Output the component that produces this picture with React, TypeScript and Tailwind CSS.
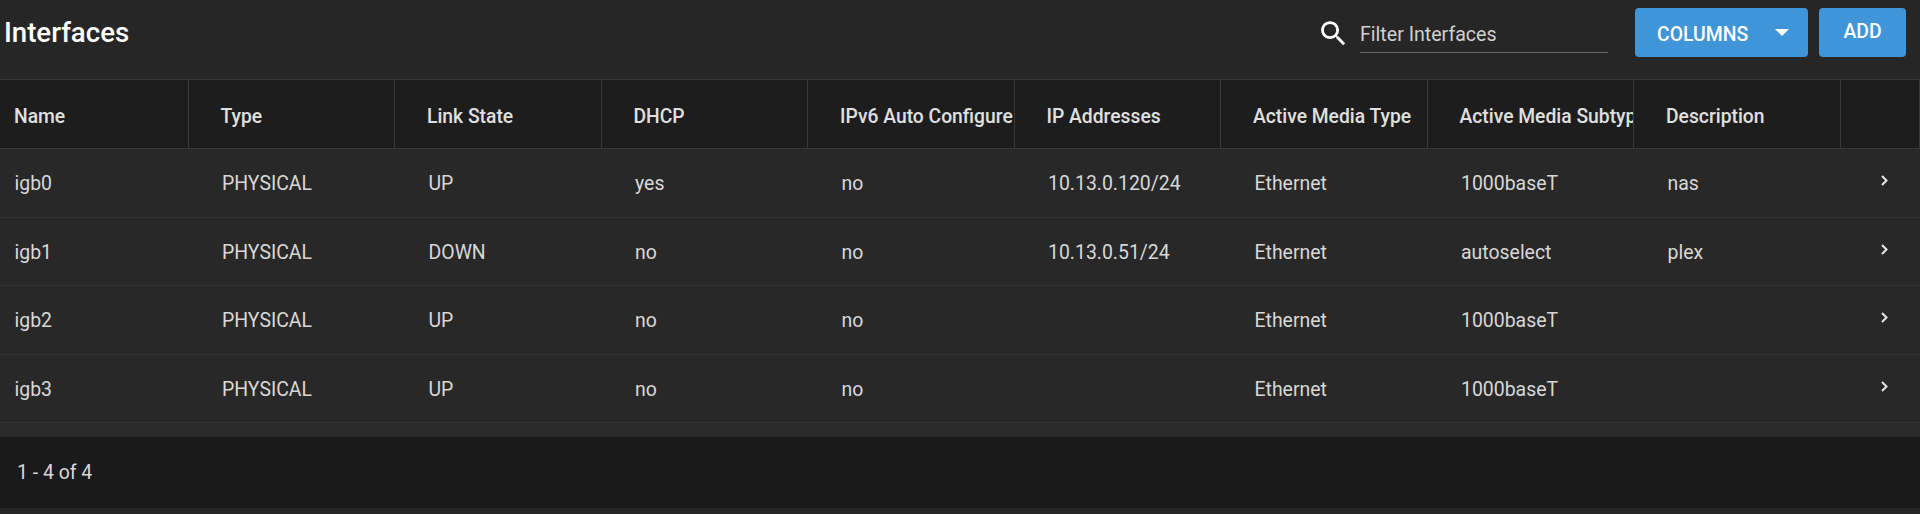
import React from "react";

const heads = ["Name","Type","Link State","DHCP","IPv6 Auto Configure","IP Addresses","Active Media Type","Active Media Subtype","Description",""];
const rows = [
  ["igb0","PHYSICAL","UP","yes","no","10.13.0.120/24","Ethernet","1000baseT","nas"],
  ["igb1","PHYSICAL","DOWN","no","no","10.13.0.51/24","Ethernet","autoselect","plex"],
  ["igb2","PHYSICAL","UP","no","no","","Ethernet","1000baseT",""],
  ["igb3","PHYSICAL","UP","no","no","","Ethernet","1000baseT",""],
];

function Chevron() {
  return (
    <svg width="10" height="12" viewBox="0 0 10 12" className="block">
      <path d="M3 1 L7.5 5.5 L3 10" fill="none" stroke="#e8e8e8" strokeWidth="2" />
    </svg>
  );
}

export default function App() {
  return (
    <div className="h-[514px] w-[1920px] overflow-hidden bg-[#262626] text-[#e0e0e0]" style={{ fontFamily: "Roboto, sans-serif" }}>
      <div className="flex h-[80px] items-start justify-between border-b border-[#3a3a3a]">
        <h1 className="ml-[4px] mt-[15px] text-[27.6px] font-medium leading-[36px] text-white">Interfaces</h1>
        <div className="flex items-start">
          <svg width="33" height="33" viewBox="0 0 24 24" className="mt-[17px]">
            <path fill="#fff" d="M15.5 14h-.79l-.28-.27C15.41 12.59 16 11.11 16 9.5 16 5.91 13.09 3 9.5 3S3 5.91 3 9.5 5.91 16 9.5 16c1.61 0 3.09-.59 4.23-1.57l.27.28v.79l5 4.99L20.49 19l-4.99-5zm-6 0C7.01 14 5 11.99 5 9.5S7.01 5 9.5 5 14 7.01 14 9.5 11.99 14 9.5 14z" />
          </svg>
          <div className="ml-[10px] mt-[21px] h-[32px] w-[248px] border-b border-[#666] text-[19.6px] leading-[28px] text-[#d0d0d0]">Filter Interfaces</div>
          <div className="ml-[27px] mt-[8px] flex h-[49px] w-[173px] items-center rounded-[4px] bg-[#3f95d8] pl-[22px] pt-[4px] text-[19.4px] font-medium text-white">
            COLUMNS
            <span className="mb-[4px] ml-[27px] h-0 w-0 border-x-[7px] border-t-[7px] border-x-transparent border-t-white" />
          </div>
          <div className="ml-[11px] mr-[14px] mt-[8px] flex h-[49px] w-[87px] items-center justify-center rounded-[4px] bg-[#3f95d8] pb-[1px] text-[19.4px] font-medium text-white">ADD</div>
        </div>
      </div>
      <div className="grid h-[69px] grid-cols-[188.5px_repeat(8,206.5px)_79.5px] border-b border-[#3a3a3a] bg-[#1d1d1d]">
        {heads.map((h, i) => (
          <div key={i} className={`flex items-center overflow-hidden whitespace-nowrap border-r border-[#3a3a3a] pt-[7px] text-[19.3px] font-medium ${i === 0 ? "pl-[14px]" : "pl-[32px]"}`}>{h}</div>
        ))}
      </div>
      <div>
        {rows.map((r, i) => (
          <div key={i} className="grid h-[68.5px] grid-cols-[188.5px_repeat(8,206.5px)_79.5px] border-b border-[#333] bg-[#282828] text-[19.45px] text-[#d8d8d8]">
            {r.map((c, j) => (
              <div key={j} className={`flex items-center whitespace-nowrap pt-[2px] ${j === 0 ? "pl-[14.5px]" : "pl-[33.5px]"}`}>{c}</div>
            ))}
            <div className="flex items-center pb-[3px] pl-[38px]"><Chevron /></div>
          </div>
        ))}
      </div>
      <div className="h-[14px] bg-[#2a2a2a]" />
      <div className="flex h-[71px] items-center bg-[#1a1a1a] pl-[17px] text-[19.45px] text-[#d8d8d8]">1 - 4 of 4</div>
    </div>
  );
}
